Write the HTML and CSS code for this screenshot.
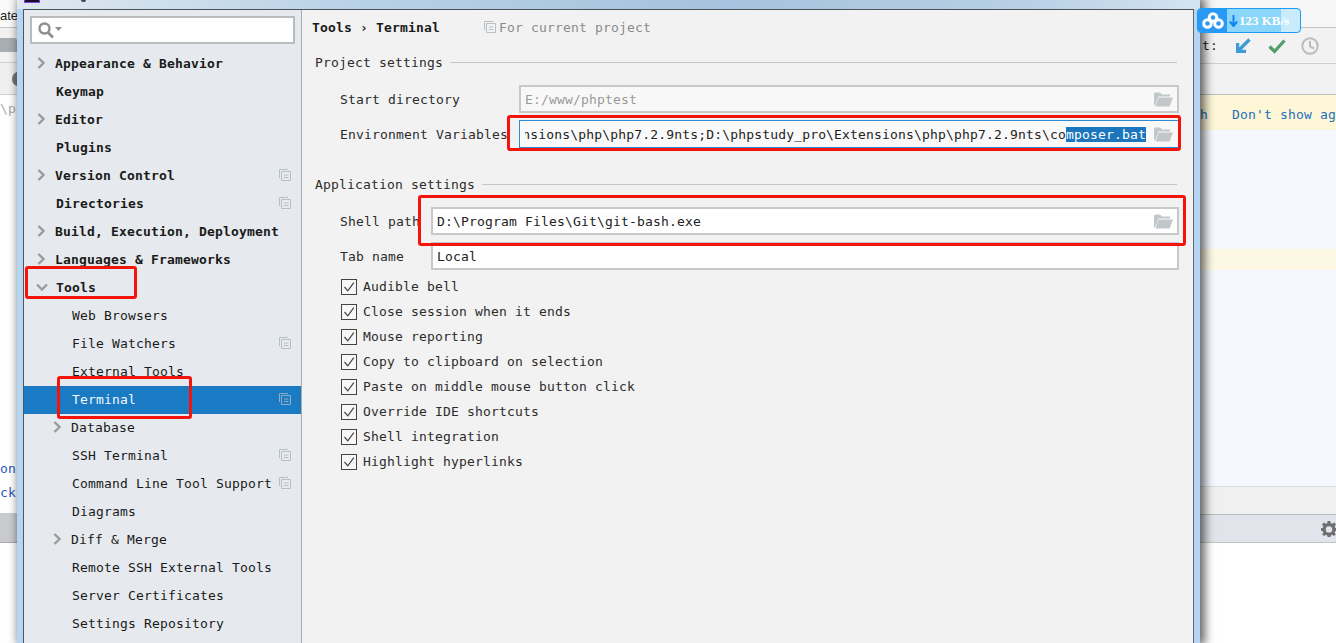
FILE: index.html
```html
<!DOCTYPE html>
<html lang="en">
<head>
<meta charset="utf-8">
<title>Settings - Tools - Terminal</title>
<link rel="stylesheet" href="styles.css">
</head>
<body>
<svg class="defs" width="0" height="0" aria-hidden="true">
  <symbol id="chev" viewBox="0 0 8 12"><path d="M1.500 1 L6.500 6 L1.500 11" fill="none" stroke="#9b9b9b" stroke-width="2.400"/></symbol>
  <symbol id="chev-down" viewBox="0 0 12 8"><path d="M1 1.500 L6 6.500 L11 1.500" fill="none" stroke="#9b9b9b" stroke-width="2.400"/></symbol>
  <symbol id="copy" viewBox="0 0 12 12"><path d="M.5 9V.5H9" fill="none" stroke="#b9c0c5"/><path d="M2.500 2.500H11.500V11.500H2.500Z" fill="none" stroke="#b9c0c5"/><path d="M5 6H9.500M5 8.500H9.500" stroke="#b9c0c5"/></symbol>
  <symbol id="folder" viewBox="0 0 19 15"><path d="M0 14V1.500L1 .5H6L8 2.500H16V4.500H4.500L1.800 12Z" fill="#c2c7ca"/><path d="M1.500 14.500L4.600 5.500H19L15.600 14.500Z" fill="#c2c7ca"/></symbol>
  <symbol id="check" viewBox="0 0 16 16"><rect x=".5" y=".5" width="15" height="15" fill="#f7f7f7" stroke="#444"/><path d="M3.500 8L6.800 11.800L12.800 3.600" fill="none" stroke="#444" stroke-width="1.200"/></symbol>
</svg>

<div class="desktop">
  <div class="back-left">
    <div class="bl-top"><span>ate</span></div>
    <div class="bl-tool"><i class="bl-folder"></i></div>
    <div class="bl-tool2"><i class="bl-round"></i></div>
    <div class="bl-body">
      <span class="bl-path">\p</span>
      <span class="bl-link bl-on">on</span>
      <span class="bl-link">ck</span>
    </div>
    <div class="bl-bar"></div>
    <div class="bl-end"></div>
  </div>

  <div class="back-right">
    <div class="br-top"></div>
    <div class="br-tool">
      <span class="br-label">t:</span>
      <svg class="br-icon" width="16" height="16" viewBox="0 0 16 16"><path d="M14.500 1.500L5 11" fill="none" stroke="#3f9bd6" stroke-width="3.400"/><path d="M1 5H4.200V11.800H11V15H1Z M4 9L8 12.500H4Z" fill="#3f9bd6"/></svg>
      <svg class="br-icon" width="18" height="16" viewBox="0 0 18 16"><path d="M1.500 8.500L6.500 13.500L16.500 2.500" fill="none" stroke="#4f9e6a" stroke-width="3.200"/></svg>
      <svg class="br-icon" width="18" height="18" viewBox="0 0 18 18"><circle cx="9" cy="9" r="7.700" fill="none" stroke="#bcbcbc" stroke-width="2"/><path d="M9 4V9.500L13 11.500" fill="none" stroke="#bcbcbc" stroke-width="2"/></svg>
    </div>
    <div class="br-gap"></div>
    <div class="br-notice"><span class="br-h">h</span><span class="br-dont">Don't show again</span></div>
    <div class="br-editor"><div class="br-hl"></div></div>
    <div class="br-status"></div>
    <div class="br-bar">
      <svg class="br-gear" width="16" height="16" viewBox="0 0 16 16"><path d="M6.600 0H9.400L9.800 2.200L11.300 2.800L13.200 1.600L15 3.600L13.600 5.400L14.200 6.800L16 7.200V9.800L14.200 10.200L13.600 11.600L14.800 13.400L12.900 15L11.200 13.800L9.800 14.400L9.400 16H6.600L6.200 14.400L4.800 13.800L3.100 15L1.200 13.400L2.400 11.600L1.800 10.200L0 9.800V7.200L1.800 6.800L2.400 5.400L1 3.600L2.800 1.600L4.700 2.800L6.200 2.200Z M8 5.200A3.200 3.200 0 1 0 8 11.600A3.200 3.200 0 1 0 8 5.200Z" fill="#6f6f6f" fill-rule="evenodd"/></svg>
    </div>
    <div class="br-end"></div>
  </div>

  <div class="dialog">
    <div class="titlebar"><i class="app-icon"></i><i class="title-dot"></i></div>
    <div class="dialog-body">
      <aside class="sidebar">
        <div class="search">
          <svg width="16" height="17" viewBox="0 0 16 17"><circle cx="6.500" cy="6.500" r="5" fill="none" stroke="#8f8f8f" stroke-width="2.400"/><path d="M10 10.500L15 15.500" stroke="#8f8f8f" stroke-width="2.600"/></svg>
          <svg class="search-arrow" width="7" height="4" viewBox="0 0 7 4"><path d="M0 0H7L3.500 4Z" fill="#8f8f8f"/></svg>
        </div>
        <ul class="tree">
          <li class="row top"><span class="slot has-chev"><svg class="chev" width="8" height="12"><use href="#chev"/></svg></span>Appearance &amp; Behavior</li>
          <li class="row top"><span class="slot"></span>Keymap</li>
          <li class="row top"><span class="slot has-chev"><svg class="chev" width="8" height="12"><use href="#chev"/></svg></span>Editor</li>
          <li class="row top"><span class="slot"></span>Plugins</li>
          <li class="row top"><span class="slot has-chev"><svg class="chev" width="8" height="12"><use href="#chev"/></svg></span>Version Control<svg class="copy" width="12" height="12"><use href="#copy"/></svg></li>
          <li class="row top"><span class="slot"></span>Directories<svg class="copy" width="12" height="12"><use href="#copy"/></svg></li>
          <li class="row top"><span class="slot has-chev"><svg class="chev" width="8" height="12"><use href="#chev"/></svg></span>Build, Execution, Deployment</li>
          <li class="row top"><span class="slot has-chev"><svg class="chev" width="8" height="12"><use href="#chev"/></svg></span>Languages &amp; Frameworks</li>
          <li class="row top"><span class="slot"><svg class="chev-d" width="12" height="8"><use href="#chev-down"/></svg></span>Tools</li>
          <li class="row sub"><span class="slot"></span>Web Browsers</li>
          <li class="row sub"><span class="slot"></span>File Watchers<svg class="copy" width="12" height="12"><use href="#copy"/></svg></li>
          <li class="row sub"><span class="slot"></span>External Tools</li>
          <li class="row sub selected"><span class="slot"></span>Terminal<svg class="copy" width="12" height="12"><use href="#copy"/></svg></li>
          <li class="row sub"><span class="slot has-chev"><svg class="chev" width="8" height="12"><use href="#chev"/></svg></span>Database</li>
          <li class="row sub"><span class="slot"></span>SSH Terminal<svg class="copy" width="12" height="12"><use href="#copy"/></svg></li>
          <li class="row sub"><span class="slot"></span>Command Line Tool Support<svg class="copy" width="12" height="12"><use href="#copy"/></svg></li>
          <li class="row sub"><span class="slot"></span>Diagrams</li>
          <li class="row sub"><span class="slot has-chev"><svg class="chev" width="8" height="12"><use href="#chev"/></svg></span>Diff &amp; Merge</li>
          <li class="row sub"><span class="slot"></span>Remote SSH External Tools</li>
          <li class="row sub"><span class="slot"></span>Server Certificates</li>
          <li class="row sub"><span class="slot"></span>Settings Repository</li>
        </ul>
      </aside>

      <main class="content">
        <header class="crumbs">
          <b class="crumb-path">Tools › Terminal</b>
          <svg class="crumb-copy" width="12" height="12"><use href="#copy"/></svg>
          <span class="crumb-note">For current project</span>
        </header>

        <div class="section-title"><span>Project settings</span><i></i></div>
        <div class="fields wide">
          <label>Start directory</label>
          <div class="input disabled"><span class="value">E:/www/phptest</span><svg width="19" height="15"><use href="#folder"/></svg></div>
          <label>Environment Variables</label>
          <div class="input focused"><div class="clip"><span class="value">nsions\php\php7.2.9nts;D:\phpstudy_pro\Extensions\php\php7.2.9nts\co<span class="sel">mposer.bat</span></span></div><svg width="19" height="15"><use href="#folder"/></svg></div>
        </div>

        <div class="section-title second"><span>Application settings</span><i></i></div>
        <div class="fields narrow">
          <label>Shell path</label>
          <div class="input"><span class="value">D:\Program Files\Git\git-bash.exe</span><svg width="19" height="15"><use href="#folder"/></svg></div>
          <label>Tab name</label>
          <div class="input"><span class="value">Local</span></div>
        </div>

        <ul class="checks">
          <li><svg width="16" height="16"><use href="#check"/></svg>Audible bell</li>
          <li><svg width="16" height="16"><use href="#check"/></svg>Close session when it ends</li>
          <li><svg width="16" height="16"><use href="#check"/></svg>Mouse reporting</li>
          <li><svg width="16" height="16"><use href="#check"/></svg>Copy to clipboard on selection</li>
          <li><svg width="16" height="16"><use href="#check"/></svg>Paste on middle mouse button click</li>
          <li><svg width="16" height="16"><use href="#check"/></svg>Override IDE shortcuts</li>
          <li><svg width="16" height="16"><use href="#check"/></svg>Shell integration</li>
          <li><svg width="16" height="16"><use href="#check"/></svg>Highlight hyperlinks</li>
        </ul>
      </main>
    </div>
  </div>

  <div class="netdisk">
    <span class="nd-logo"><svg width="22" height="17" viewBox="0 0 22 17"><g fill="none" stroke="#fff" stroke-width="3"><circle cx="11" cy="5.500" r="3.800"/><circle cx="5.500" cy="11.500" r="3.800"/><circle cx="16.500" cy="11.500" r="3.800"/></g></svg></span>
    <span class="nd-speed"><svg width="9" height="12" viewBox="0 0 9 12"><path d="M4.500 0V10M.8 6.500L4.500 11L8.200 6.500" fill="none" stroke="#0d84f0" stroke-width="2"/></svg>123 KB/s</span>
  </div>

  <i class="mark mark-env"></i>
  <i class="mark mark-shell"></i>
  <i class="mark mark-tools"></i>
  <i class="mark mark-term"></i>
</div>
</body>
</html>
```

FILE: styles.css
```css
* { box-sizing: border-box; }
html, body { margin: 0; padding: 0; height: 100%; overflow: hidden; background: #fff; }
body, label { font-family: "DejaVu Sans Mono", "Liberation Mono", monospace; font-size: 13px; letter-spacing: .17px; color: #222; }
ul { list-style: none; margin: 0; padding: 0; }
i { display: block; font-style: normal; }
.defs { position: absolute; }

.desktop { position: relative; display: flex; width: 1336px; height: 643px; overflow: hidden; justify-content: space-between; }

/* Window behind the dialog, left edge */
.back-left { width: 17px; height: 643px; display: flex; flex-direction: column; flex: none; overflow: hidden; }
.bl-top { height: 28px; padding-top: 8px; display: flex; justify-content: flex-start; border-bottom: 1px solid #c4c4c4; background: #fafafa; white-space: nowrap; font-family: "Liberation Sans", sans-serif; letter-spacing: 0; }
.bl-tool { height: 35px; padding-top: 10px; background: #f2f2f2; border-bottom: 1px solid #cfcfcf; }
.bl-folder { width: 17px; height: 14px; background: #a8aeb2; border-radius: 0 3px 0 0; }
.bl-tool2 { height: 32px; padding: 9px 0 0 12px; background: #f0f0f0; border-bottom: 1px solid #cfcfcf; }
.bl-round { width: 12px; height: 14px; border-radius: 50%; background: #777; }
.bl-body { height: 418px; display: flex; flex-direction: column; align-items: flex-end; background: #fff; padding: 6px 1px 0 0; }
.bl-path { color: #aaa; }
.bl-link { color: #2a5ab8; line-height: 24px; white-space: nowrap; }
.bl-on { margin-top: 341px; }
.bl-bar { height: 30px; background: #c9cbcf; border-bottom: 1px solid #aaa; flex: none; }
.bl-end { flex: 1; background: #fff; }

/* Window behind the dialog, right side */
.back-right { width: 136px; height: 643px; display: flex; flex-direction: column; flex: none; overflow: hidden; }
.br-top { height: 28px; background: #f7f7f7; border-bottom: 1px solid #c4c4c4; flex: none; }
.br-tool { height: 36px; display: flex; align-items: center; padding-left: 2px; background: #f2f2f2; border-bottom: 1px solid #cfcfcf; flex: none; }
.br-label { width: 33px; color: #222; flex: none; }
.br-icon { flex: none; }
.br-icon:nth-of-type(2) { margin-left: 17px; }
.br-icon:nth-of-type(3) { margin-left: 15px; }
.br-gap { height: 31px; background: #f2f2f2; border-bottom: 1px solid #bdbdbd; flex: none; }
.br-notice { height: 35px; display: flex; align-items: center; padding-top: 4px; background: #fdf7d8; white-space: nowrap; flex: none; }
.br-h { width: 32px; flex: none; color: #2470b8; }
.br-dont { flex: none; color: #2470b8; }
.br-editor { height: 357px; padding-top: 119px; background: #f5f9ff; border-bottom: 1px solid #dcdcdc; flex: none; }
.br-hl { height: 21px; background: #fdf8e4; }
.br-status { height: 28px; background: #f0f0f0; border-bottom: 1px solid #bdbdbd; flex: none; }
.br-bar { height: 28px; display: flex; align-items: center; padding-left: 121px; background: #e1e4eb; border-bottom: 1px solid #c4c4c4; flex: none; }
.br-gear { flex: none; }
.br-end { flex: 1; background: #fff; }

/* Settings dialog */
.dialog { position: absolute; left: 17px; top: 0; width: 1183px; height: 643px; display: flex; flex-direction: column; background: #b5d5f3; box-shadow: 3px 0 9px 2px rgba(0,0,0,.6); }
.titlebar { position: relative; height: 9px; flex: none; background: linear-gradient(90deg, #dfe8f0 0, #b7d0e6 30%, #a5c3de 60%, #b8cfe4 85%, #d4e4f2 100%); }
.app-icon { position: absolute; left: 7px; top: 0; width: 16px; height: 3px; background: #101020; border: 1px solid #8a3de0; border-top: 0; }
.title-dot { position: absolute; left: 64px; top: 0; width: 5px; height: 2px; background: #445; border-radius: 0 0 3px 3px; }
.dialog-body { flex: 1; display: flex; min-height: 0; margin: 0 6px 0 6px; border-top: 1px solid #4b5158; border-left: 1px solid #555; border-right: 1px solid #666; }

.sidebar { width: 278px; flex: none; background: #e6eaee; border-right: 1px solid #a9adb1; padding: 6px 6px 0; overflow: hidden; }
.search { height: 28px; display: flex; align-items: center; padding-left: 6px; background: #fff; border: 2px solid #b9bcbf; }
.search-arrow { margin-left: 1px; margin-top: -2px; }
.tree { margin: 6px -6px 0; }
.row { position: relative; height: 28px; display: flex; align-items: center; white-space: nowrap; padding: 0 10px 2px 0; color: #1a1a1a; }
.row.top { padding-left: 8px; font-weight: 700; }
.row.sub { padding-left: 24px; }
.row.selected { background: #1b7ac4; color: #f3f8fc; }
.row.selected .copy { opacity: .75; }
.slot { width: 24px; flex: none; display: flex; align-items: center; }
.slot.has-chev { width: 23px; }
.chev { margin-left: 5px; }
.chev-d { margin-left: 4px; }
.copy { margin-left: auto; flex: none; }

.content { flex: 1; min-width: 0; background: #f2f2f2; padding: 0 14px 0 13px; }
.crumbs { height: 34px; display: flex; align-items: center; margin-left: -3px; }
.crumb-path { font-weight: 700; color: #1a1a1a; }
.crumb-copy { margin-left: 44px; }
.crumb-note { margin-left: 3px; color: #8b8b8b; }
.section-title { height: 24px; margin-top: 6px; display: flex; align-items: center; gap: 7px; padding-right: 2px; color: #2c2c2c; }
.section-title i { flex: 1; height: 1px; background: #c6c6c6; margin-top: 1px; }
.section-title.second { margin-top: 24px; }
.fields { display: grid; grid-auto-rows: 28px; row-gap: 7px; margin-top: 11px; padding-left: 25px; align-items: center; }
.fields.wide { grid-template-columns: 179px minmax(0, 1fr); }
.fields.narrow { grid-template-columns: 91px minmax(0, 1fr); }
.fields label { color: #2c2c2c; white-space: nowrap; }
.input { height: 28px; display: flex; align-items: center; justify-content: space-between; padding: 0 4px 0 4px; background: #fff; border: 2px solid #c8c8c8; overflow: hidden; }
.input svg { flex: none; }
.input .value { white-space: nowrap; color: #222; }
.input.disabled { background: #f8f8f8; }
.input.disabled .value { color: #9a9a9a; }
.input.focused { border: 1px solid #2b8bd3; padding-left: 5px; padding-right: 5px; background: #f9f9f9; }
.clip { flex: 1; min-width: 0; margin-right: 8px; display: flex; justify-content: flex-end; overflow: hidden; }
.clip .value { flex: none; }
.sel { background: #1b76bd; color: #fff; padding: 2px 0; }
.checks { margin-top: 4px; padding-left: 26px; }
.checks li { height: 25px; display: flex; align-items: center; gap: 6px; color: #2c2c2c; white-space: nowrap; }
.checks svg { flex: none; }

/* Floating download-speed widget */
.netdisk { position: absolute; left: 1197px; top: 8px; width: 104px; height: 25px; display: flex; border: 1px solid #1d9bf5; border-radius: 4px; overflow: hidden; background: linear-gradient(90deg, #8bd6fb 0, #8bd6fb 81%, #c9ecfd 81%); }
.nd-logo { width: 29px; flex: none; display: flex; align-items: center; justify-content: center; background: #2a99f6; }
.nd-speed { display: flex; align-items: center; gap: 1px; padding-left: 2px; font-family: "Liberation Serif", serif; font-weight: 700; font-size: 13px; letter-spacing: 0; color: #fff; white-space: nowrap; }

/* Red annotation rectangles */
.mark { position: absolute; border: 3px solid #f5140c; border-radius: 3px; }
.mark-env { left: 507px; top: 115px; width: 674px; height: 36px; }
.mark-shell { left: 418px; top: 195px; width: 768px; height: 51px; }
.mark-tools { left: 25px; top: 266px; width: 112px; height: 33px; }
.mark-term { left: 57px; top: 376px; width: 135px; height: 43px; }
```
